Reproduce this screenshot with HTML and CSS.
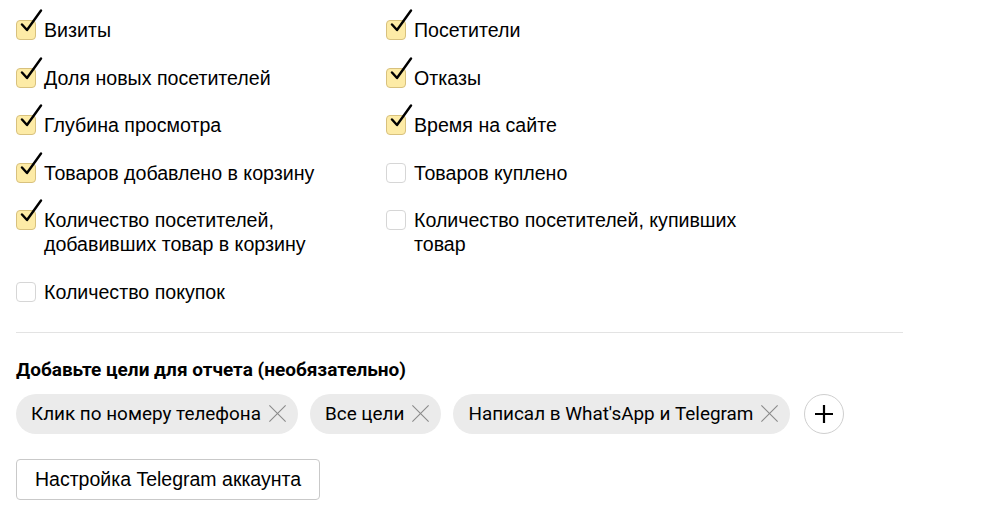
FILE: index.html
```html
<!DOCTYPE html>
<html lang="ru">
<head>
    <meta charset="UTF-8">
    <title>Метрики отчета</title>
    <link rel="stylesheet" href="styles.css">
</head>
<body>
    <div class="page">
        <div class="metrics">
            <label class="check on"><span class="box"></span><span class="label">Визиты</span></label>
            <label class="check on"><span class="box"></span><span class="label">Посетители</span></label>
            <label class="check on"><span class="box"></span><span class="label">Доля новых посетителей</span></label>
            <label class="check on"><span class="box"></span><span class="label">Отказы</span></label>
            <label class="check on"><span class="box"></span><span class="label">Глубина просмотра</span></label>
            <label class="check on"><span class="box"></span><span class="label">Время на сайте</span></label>
            <label class="check on"><span class="box"></span><span class="label">Товаров добавлено в корзину</span></label>
            <label class="check"><span class="box"></span><span class="label">Товаров куплено</span></label>
            <label class="check on"><span class="box"></span><span class="label">Количество посетителей,<br>добавивших товар в корзину</span></label>
            <label class="check"><span class="box"></span><span class="label">Количество посетителей, купивших<br>товар</span></label>
            <label class="check"><span class="box"></span><span class="label">Количество покупок</span></label>
        </div>

        <div class="divider"></div>

        <div class="goals-title">Добавьте цели для отчета (необязательно)</div>
        <div class="goals">
            <span class="chip"><span>Клик по номеру телефона</span><span class="chip-x"></span></span>
            <span class="chip"><span>Все цели</span><span class="chip-x"></span></span>
            <span class="chip"><span>Написал в What'sApp и Telegram</span><span class="chip-x"></span></span>
            <span class="add-btn">
                <svg width="22" height="22" viewBox="0 0 22 22"><path d="M11 2v18M2 11h18" stroke="#000" stroke-width="2.2"/></svg>
            </span>
        </div>

        <button class="tg-btn">Настройка Telegram аккаунта</button>
    </div>
</body>
</html>
```

FILE: styles.css
```css
body {
    margin: 0;
    background: #fff;
    color: #000;
    font-family: "Liberation Sans", Arial, sans-serif;
}
.page {
    padding: 18px 16px 0 16px;
}
.metrics {
    display: grid;
    grid-template-columns: 370px 420px;
    row-gap: 23.5px;
}
.check {
    position: relative;
    display: flex;
    align-items: flex-start;
    gap: 8px;
    font-size: 19.6px;
    line-height: 24px;
}
.box {
    flex: none;
    width: 18px;
    height: 18px;
    margin-top: 2px;
    border: 1px solid #d6d6d6;
    border-radius: 4px;
    background: #fff;
}
.check.on .box {
    background: #fdeba6;
    border-color: #d8c17e;
}
.check.on::after {
    content: "";
    position: absolute;
    left: 4px;
    top: -9px;
    width: 28px;
    height: 26px;
    background: url("data:image/svg+xml;utf8,<svg xmlns='http://www.w3.org/2000/svg' width='28' height='26'><path d='M2 15.5 L7 21 L21 1.5' fill='none' stroke='black' stroke-width='2.4' stroke-linecap='round' stroke-linejoin='round'/></svg>") no-repeat;
}
.divider {
    height: 1px;
    background: #e3e3e3;
    width: 887px;
    margin: 28px 0 0 0;
}
.goals-title {
    margin-top: 25px;
    font-family: Roboto, "Liberation Sans", sans-serif;
    font-weight: 700;
    font-size: 19px;
    line-height: 24px;
}
.goals {
    display: flex;
    align-items: center;
    gap: 12px;
    margin-top: 12px;
}
.chip {
    display: inline-flex;
    align-items: center;
    height: 40px;
    padding: 0 12px 0 15px;
    border-radius: 20px;
    background: #ebebeb;
    font-family: Roboto, "Liberation Sans", sans-serif;
    font-size: 18.9px;
    gap: 8px;
}
.chip-x {
    position: relative;
    width: 17px;
    height: 18px;
}
.chip-x::before,
.chip-x::after {
    content: "";
    position: absolute;
    left: -3px;
    top: 8.5px;
    width: 23px;
    height: 1px;
    background: #8a8a8a;
    transform: rotate(45deg);
}
.chip-x::after {
    transform: rotate(-45deg);
}
.add-btn {
    display: flex;
    align-items: center;
    justify-content: center;
    width: 38px;
    height: 38px;
    border: 1px solid #cfcfcf;
    border-radius: 50%;
    margin-left: 2px;
}
.tg-btn {
    display: block;
    margin-top: 25px;
    height: 41px;
    padding: 0 18px;
    background: #fff;
    border: 1px solid #c9c9c9;
    border-radius: 4px;
    font-family: "Liberation Sans", Arial, sans-serif;
    font-size: 19.5px;
    color: #000;
}
```
